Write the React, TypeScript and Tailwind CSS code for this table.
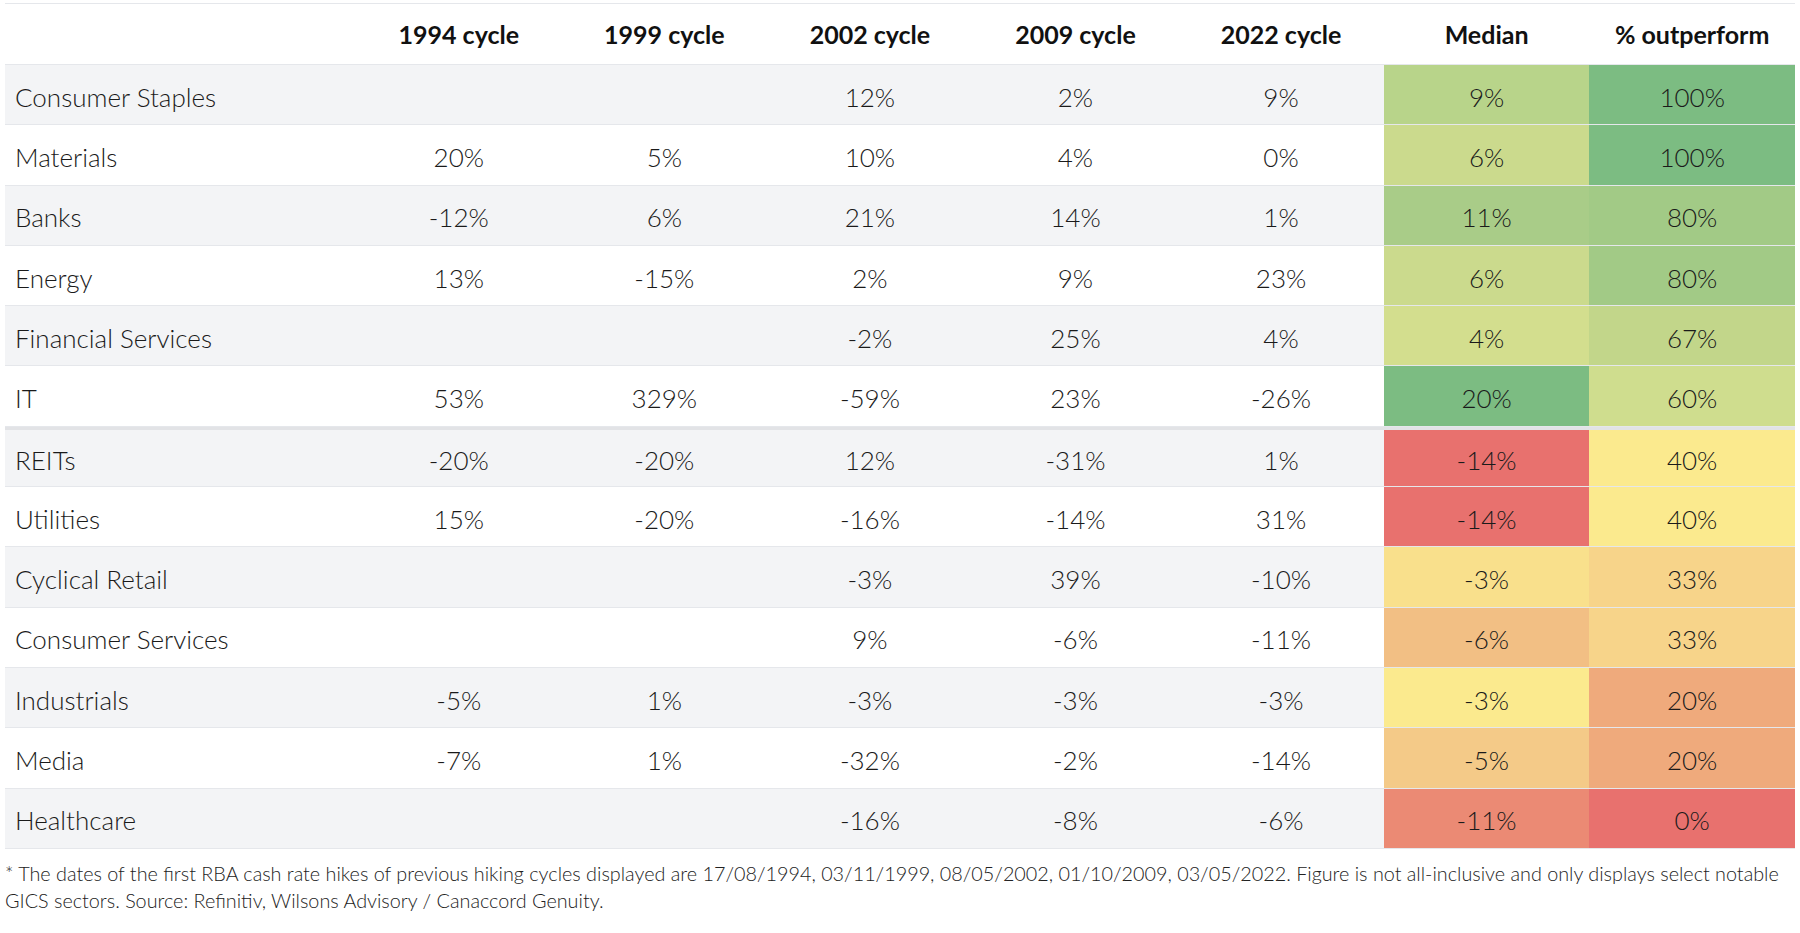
import React from 'react';

type Row = {
  sector: string;
  cycles: string[];
  median: string;
  medianBg: string;
  outperform: string;
  outperformBg: string;
  thickTop?: boolean;
};

const headers = ['1994 cycle', '1999 cycle', '2002 cycle', '2009 cycle', '2022 cycle', 'Median', '% outperform'];

const rows: Row[] = [
  { sector: 'Consumer Staples', cycles: ['', '', '12%', '2%', '9%'], median: '9%', medianBg: 'bg-[#b8d48a]', outperform: '100%', outperformBg: 'bg-[#7cbc82]' },
  { sector: 'Materials', cycles: ['20%', '5%', '10%', '4%', '0%'], median: '6%', medianBg: 'bg-[#cbda8d]', outperform: '100%', outperformBg: 'bg-[#7cbc82]' },
  { sector: 'Banks', cycles: ['-12%', '6%', '21%', '14%', '1%'], median: '11%', medianBg: 'bg-[#a9cc88]', outperform: '80%', outperformBg: 'bg-[#a2ca86]' },
  { sector: 'Energy', cycles: ['13%', '-15%', '2%', '9%', '23%'], median: '6%', medianBg: 'bg-[#cbda8d]', outperform: '80%', outperformBg: 'bg-[#a2ca86]' },
  { sector: 'Financial Services', cycles: ['', '', '-2%', '25%', '4%'], median: '4%', medianBg: 'bg-[#d3de8e]', outperform: '67%', outperformBg: 'bg-[#c2d68a]' },
  { sector: 'IT', cycles: ['53%', '329%', '-59%', '23%', '-26%'], median: '20%', medianBg: 'bg-[#7cbc82]', outperform: '60%', outperformBg: 'bg-[#cfdd8e]' },
  { sector: 'REITs', cycles: ['-20%', '-20%', '12%', '-31%', '1%'], median: '-14%', medianBg: 'bg-[#e8716e]', outperform: '40%', outperformBg: 'bg-[#fbea8e]', thickTop: true },
  { sector: 'Utilities', cycles: ['15%', '-20%', '-16%', '-14%', '31%'], median: '-14%', medianBg: 'bg-[#e8716e]', outperform: '40%', outperformBg: 'bg-[#fbea8e]' },
  { sector: 'Cyclical Retail', cycles: ['', '', '-3%', '39%', '-10%'], median: '-3%', medianBg: 'bg-[#f9e08c]', outperform: '33%', outperformBg: 'bg-[#f7d48a]' },
  { sector: 'Consumer Services', cycles: ['', '', '9%', '-6%', '-11%'], median: '-6%', medianBg: 'bg-[#f2bf84]', outperform: '33%', outperformBg: 'bg-[#f7d48a]' },
  { sector: 'Industrials', cycles: ['-5%', '1%', '-3%', '-3%', '-3%'], median: '-3%', medianBg: 'bg-[#fbea8e]', outperform: '20%', outperformBg: 'bg-[#efaa7c]' },
  { sector: 'Media', cycles: ['-7%', '1%', '-32%', '-2%', '-14%'], median: '-5%', medianBg: 'bg-[#f4ca88]', outperform: '20%', outperformBg: 'bg-[#efaa7c]' },
  { sector: 'Healthcare', cycles: ['', '', '-16%', '-8%', '-6%'], median: '-11%', medianBg: 'bg-[#eb8a74]', outperform: '0%', outperformBg: 'bg-[#e8716e]' },
];

const font = { fontFamily: 'Lato, "Open Sans", sans-serif' };

export default function App() {
  return (
    <div className="min-h-screen bg-white pt-[3px] px-[5px] text-[#1a1a1a]" style={font}>
      <div className="w-[1790px] border-t border-[#e5e7eb]">
        <div className="grid grid-cols-[351px_repeat(7,205.57px)] h-[61px] items-center border-b border-[#e5e7eb]">
          <div />
          {headers.map((h) => (
            <div key={h} className="text-center text-[25px] font-bold text-[#111] pt-[2px]">
              {h}
            </div>
          ))}
        </div>
        {rows.map((r, i) => (
          <div
            key={r.sector}
            className={`grid grid-cols-[351px_repeat(7,205.57px)] h-[60.3px] border-b border-[#e5e7eb] text-[26px] font-light ${
              i % 2 === 0 ? 'bg-[#f3f4f6]' : 'bg-white'
            } ${r.thickTop ? 'border-t-[3px] border-t-[#e2e3e6]' : ''}`}
          >
            <div className="flex items-center pl-[10px] pt-[5px]">{r.sector}</div>
            {r.cycles.map((c, j) => (
              <div key={j} className="flex items-center justify-center pt-[5px]">
                {c}
              </div>
            ))}
            <div className={`flex items-center justify-center pt-[5px] ${r.medianBg}`}>{r.median}</div>
            <div className={`flex items-center justify-center pt-[5px] ${r.outperformBg}`}>{r.outperform}</div>
          </div>
        ))}
        <p className="mt-[11px] text-[19.8px] leading-[27px] font-light text-[#222] whitespace-nowrap">
          * The dates of the first RBA cash rate hikes of previous hiking cycles displayed are 17/08/1994, 03/11/1999, 08/05/2002, 01/10/2009, 03/05/2022. Figure is not all-inclusive and only displays select notable
          <br />
          GICS sectors. Source: Refinitiv, Wilsons Advisory / Canaccord Genuity.
        </p>
      </div>
    </div>
  );
}
